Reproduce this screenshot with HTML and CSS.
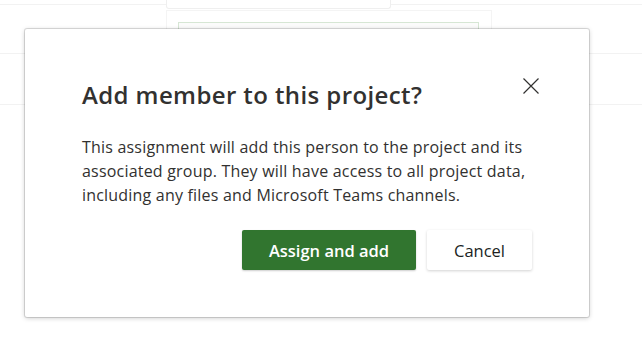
FILE: index.html
```html
<!DOCTYPE html>
<html lang="en">
<head>
<meta charset="utf-8">
<title>Add member</title>
<link rel="stylesheet" href="styles.css">
</head>
<body>
<div class="page">
  <div class="bg-top">
    <div class="bg-line bg-line-left"></div>
    <div class="bg-tab"></div>
    <div class="bg-line bg-line-right"></div>
  </div>
  <div class="bg-panel">
    <div class="bg-input"></div>
  </div>
  <div class="bg-rows">
    <div class="bg-row"></div>
    <div class="bg-row"></div>
  </div>
  <span class="caret"></span>

  <div class="dialog" role="dialog" aria-labelledby="dlg-title">
    <div class="dialog-head">
      <h1 id="dlg-title" class="dialog-title">Add member to this project?</h1>
      <button class="close" aria-label="Close">
        <svg width="16" height="16" viewBox="0 0 16 16"><path d="M0.5 0.5 L15.5 15.5 M15.5 0.5 L0.5 15.5" stroke="#323130" stroke-width="1.2" fill="none"/></svg>
      </button>
    </div>
    <p class="dialog-body">This assignment will add this person to the project and its associated group. They will have access to all project data, including any files and Microsoft Teams channels.</p>
    <div class="dialog-actions">
      <button class="btn btn-primary">Assign and add</button>
      <button class="btn btn-default">Cancel</button>
    </div>
  </div>
</div>
</body>
</html>
```

FILE: styles.css
```css
* { box-sizing: border-box; }
html, body { margin: 0; padding: 0; background: #fff; }
body {
  font-family: "Open Sans", "Noto Sans", sans-serif;
  color: #323130;
  width: 642px;
  height: 337px;
  overflow: hidden;
}
.page {
  position: relative;
  width: 642px;
  height: 337px;
}
.bg-top {
  display: flex;
  align-items: flex-start;
  height: 9px;
}
.bg-line {
  height: 5px;
  border-bottom: 1px solid #f2f2f2;
}
.bg-line-left { width: 166px; }
.bg-line-right { flex: 1; }
.bg-tab {
  width: 225px;
  height: 9px;
  border: 1px solid #efefef;
  border-top: none;
  border-radius: 0 0 3px 3px;
}
.bg-panel {
  margin: 1px 0 0 166px;
  width: 326px;
  height: 60px;
  border: 1px solid #f4f4f4;
  border-bottom: none;
  padding: 11px 0 0 11px;
}
.bg-input {
  width: 301px;
  height: 30px;
  border: 1px solid #d6e6d4;
  background: #fbfbfb;
}
.bg-rows {
  margin-top: -17px;
}
.bg-row {
  height: 51px;
  border-top: 1px solid #f2f2f2;
}
.caret {
  position: absolute;
  left: 190px;
  top: 30px;
  width: 1px;
  height: 22px;
  background: #000;
}
.dialog {
  position: absolute;
  left: 25px;
  top: 29px;
  width: 564px;
  height: 288px;
  background: #fff;
  border-radius: 2px;
  box-shadow: 0 0 0 1px rgba(0,0,0,0.12), 0 1px 5px rgba(0,0,0,0.22);
  padding: 46px 57px 0 57px;
}
.dialog-head {
  display: flex;
  align-items: flex-start;
  justify-content: space-between;
}
.dialog-title {
  margin: 0;
  font-size: 24px;
  letter-spacing: 0.4px;
  font-weight: 600;
  line-height: 40px;
  color: #323130;
}
.close {
  margin: 3px -7px 0 0;
  padding: 0;
  border: none;
  background: none;
  width: 16px;
  height: 16px;
  display: flex;
}
.dialog-body {
  margin: 20px 0 0 0;
  font-size: 16px;
  letter-spacing: 0.2px;
  line-height: 24px;
  color: #323130;
}
.dialog-actions {
  display: flex;
  justify-content: flex-end;
  gap: 11px;
  margin-top: 23px;
}
.btn {
  font-family: inherit;
  height: 40px;
  font-size: 16.5px;
  font-weight: 600;
  border-radius: 2px;
  border: none;
  cursor: pointer;
}
.btn-primary {
  width: 174px;
  background: #31752f;
  color: #fff;
  box-shadow: 0 1px 2px rgba(0,0,0,0.2);
}
.btn-default {
  width: 105px;
  background: #fff;
  color: #201f1e;
  font-weight: 400;
  box-shadow: 0 1px 3px rgba(0,0,0,0.18);
}
```
